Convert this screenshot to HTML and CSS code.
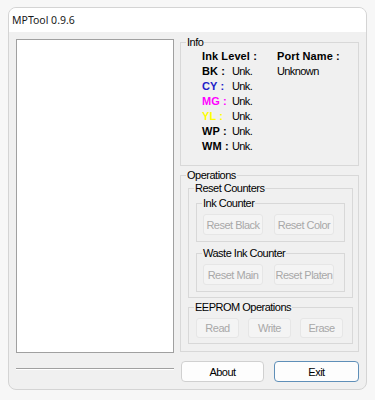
FILE: index.html
```html
<!DOCTYPE html>
<html lang="en">
<head>
    <meta charset="UTF-8">
    <meta name="viewport" content="width=device-width, initial-scale=1.0">
    <title>MPTool 0.9.6</title>
    <link rel="stylesheet" href="styles.css">
</head>
<body>
    <div class="window">
        <div class="titlebar">MPTool 0.9.6</div>
        <div class="client">
            <div class="left-col">
                <div class="listbox"></div>
                <div class="separator"></div>
            </div>
            <div class="right-col">
                <fieldset class="group info">
                    <legend>Info</legend>
                    <div class="info-grid">
                        <span class="head levels">Ink Level :</span>
                        <span class="head">Port Name :</span>

                        <span class="ink">BK :</span>
                        <span>Unk.</span>
                        <span>Unknown</span>

                        <span class="ink cy">CY :</span>
                        <span>Unk.</span>
                        <span></span>

                        <span class="ink mg">MG :</span>
                        <span>Unk.</span>
                        <span></span>

                        <span class="ink yl">YL :</span>
                        <span>Unk.</span>
                        <span></span>

                        <span class="ink">WP :</span>
                        <span>Unk.</span>
                        <span></span>

                        <span class="ink">WM :</span>
                        <span>Unk.</span>
                        <span></span>
                    </div>
                </fieldset>

                <fieldset class="group operations">
                    <legend>Operations</legend>
                    <fieldset class="group sub">
                        <legend>Reset Counters</legend>
                        <fieldset class="group counter first">
                            <legend>Ink Counter</legend>
                            <div class="btn-row wide">
                                <button disabled>Reset Black</button>
                                <button disabled>Reset Color</button>
                            </div>
                        </fieldset>
                        <fieldset class="group counter">
                            <legend>Waste Ink Counter</legend>
                            <div class="btn-row wide">
                                <button disabled>Reset Main</button>
                                <button disabled>Reset Platen</button>
                            </div>
                        </fieldset>
                    </fieldset>
                    <fieldset class="group sub eeprom">
                        <legend>EEPROM Operations</legend>
                        <div class="btn-row small">
                            <button disabled>Read</button>
                            <button disabled>Write</button>
                            <button disabled>Erase</button>
                        </div>
                    </fieldset>
                </fieldset>

                <div class="actions">
                    <button class="about">About</button>
                    <button class="exit">Exit</button>
                </div>
            </div>
        </div>
    </div>
</body>
</html>
```

FILE: styles.css
```css
body {
    margin: 0;
    background-color: #f7f7f7;
    font-family: "Liberation Sans", Arial, sans-serif;
    font-size: 11px;
    letter-spacing: -0.5px;
    color: #000;
}
.window {
    width: 357px;
    height: 381px;
    margin: 7px 0 0 8px;
    border: 1px solid #d4d4d4;
    border-radius: 8px;
    background-color: #f0f0f0;
    overflow: hidden;
}
.titlebar {
    height: 24px;
    line-height: 24px;
    padding-left: 3px;
    background-color: #fff;
    font-family: "Noto Sans", sans-serif;
    font-size: 10.5px;
    letter-spacing: 0;
    color: #1a1a1a;
}
.client {
    display: grid;
    grid-template-columns: 158px 179px;
    column-gap: 6px;
    padding: 0 7px;
}
.left-col {
    padding-top: 7px;
}
.listbox {
    height: 312px;
    background-color: #fff;
    border: 1px solid #a0a0a0;
}
.separator {
    margin-top: 15px;
    height: 1px;
    background-color: #a0a0a0;
    border-bottom: 1px solid #fff;
}
.right-col {
    padding-top: 4px;
}
.group {
    margin: 0;
    padding: 0 5px;
    min-width: 0;
    border: 1px solid #d8d8d8;
}
.group legend {
    padding: 0 1px;
    line-height: 13px;
}
.info {
    padding-bottom: 11px;
}
.info-grid {
    display: grid;
    grid-template-columns: 30px 45px 1fr;
    grid-auto-rows: 15px;
    line-height: 15px;
    margin-left: 16px;
    letter-spacing: -0.6px;
}
.head, .ink {
    font-weight: bold;
    letter-spacing: 0.1px;
}
.levels {
    grid-column: span 2;
}
.cy {
    color: #2020c8;
}
.mg {
    color: #ff00ff;
}
.yl {
    color: #ffff00;
}
.operations {
    margin-top: 3px;
    padding-bottom: 7px;
}
.sub {
    margin-left: 2px;
    padding-bottom: 5px;
}
.counter {
    margin: 5px 2px 0 2px;
    padding-bottom: 6px;
}
.counter.first {
    margin-top: 2px;
}
.eeprom {
    margin-top: 3px;
}
.btn-row {
    display: flex;
}
.btn-row.wide {
    gap: 11px;
    margin: 4px 0 0 1px;
}
.btn-row.small {
    gap: 9px;
    margin: 4px 0 0 2px;
}
button {
    font-family: "Liberation Sans", Arial, sans-serif;
    font-size: 11px;
    letter-spacing: -0.5px;
    padding: 0;
    border-radius: 3px;
}
button:disabled {
    color: #a8a8a8;
    background-color: #f4f4f4;
    border: 1px solid #e6e6e6;
}
.wide button {
    width: 60px;
    height: 21px;
}
.small button {
    width: 43px;
    height: 20px;
}
.actions {
    display: flex;
    gap: 10px;
    margin: 9px 0 0 1px;
}
.actions button {
    height: 21px;
    color: #000;
    background-color: #fdfdfd;
    border: 1px solid #d0d0d0;
    border-radius: 4px;
}
.about {
    width: 83px;
}
.exit {
    width: 85px;
    border-color: #5f8fb8 !important;
}
```
